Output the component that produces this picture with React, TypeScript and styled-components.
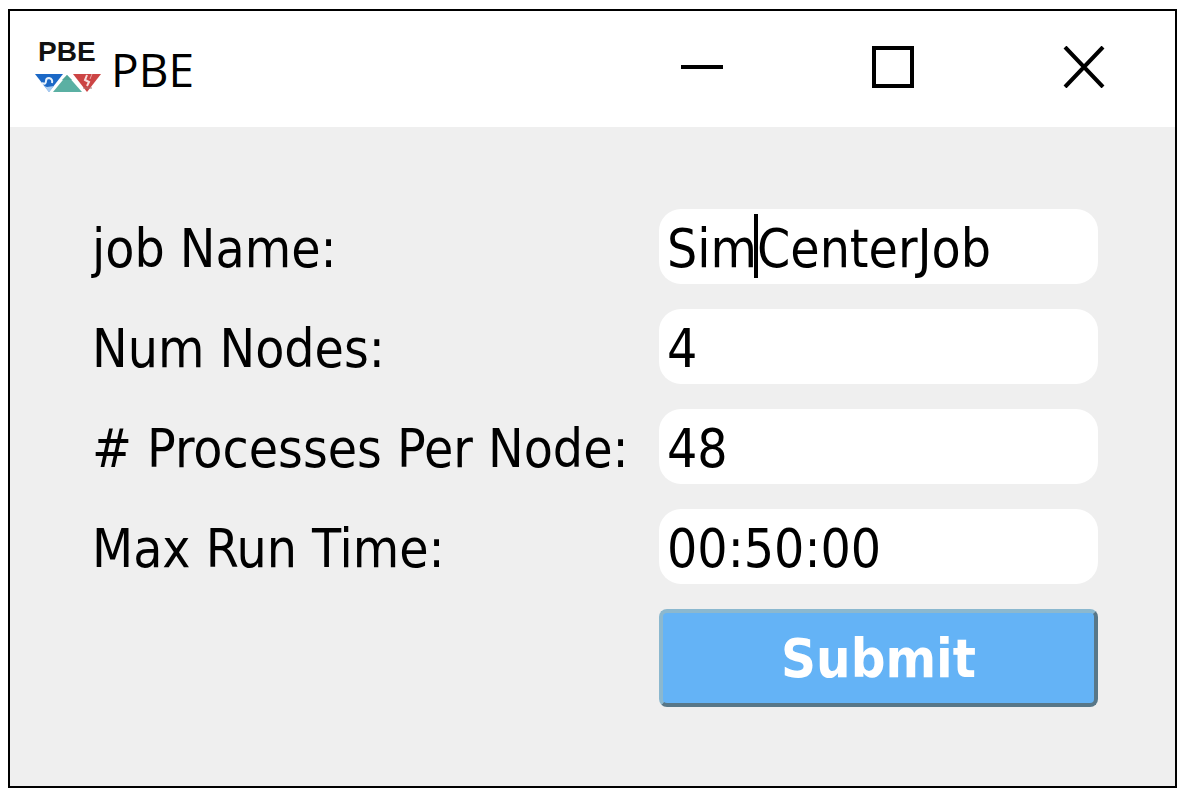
import React from "react";
import styled, { createGlobalStyle } from "styled-components";

const GlobalStyle = createGlobalStyle`
  *, *::before, *::after { box-sizing: border-box; }
  body {
    margin: 0;
    background: #ffffff;
    color: #000000;
    font-family: "DejaVu Sans Condensed", "DejaVu Sans", sans-serif;
  }
`;

const Page = styled.div`
  display: flex;
  min-height: 100vh;
  padding: 9px 10px 6px 8px;
`;

const Window = styled.main`
  flex: 1;
  display: flex;
  flex-direction: column;
  border: 2px solid #000000;
  background: #efefef;
`;

const TitleBar = styled.header`
  display: flex;
  align-items: stretch;
  justify-content: space-between;
  height: 116px;
  background: #ffffff;
`;

const Brand = styled.div`
  display: flex;
  align-items: center;
  gap: 9px;
  padding-left: 24px;
`;

const Title = styled.h1`
  margin: 0;
  font: 400 46px/64px "Open Sans", "Noto Sans", sans-serif;
`;

const WindowControls = styled.div`
  display: flex;
  gap: 9px;
`;

const ControlButton = styled.button`
  display: flex;
  align-items: center;
  justify-content: center;
  width: 182px;
  padding: 0 0 4px;
  border: 0;
  background: transparent;
`;

const Form = styled.form`
  display: grid;
  grid-template-columns: 567fr 439fr;
  row-gap: 25px;
  padding: 82px 77px 72px 82px;
`;

const Label = styled.label`
  padding-top: 4px;
  font-size: 53px;
  line-height: 71px;
  white-space: nowrap;
`;

const Field = styled.div`
  position: relative;
`;

const TextInput = styled.input`
  display: block;
  width: 100%;
  height: 75px;
  padding: 4px 8px 0;
  border: 0;
  border-radius: 22px;
  outline: 0;
  background: #ffffff;
  color: #000000;
  font-family: inherit;
  font-size: 53px;
`;

const Caret = styled.span`
  position: absolute;
  top: 5px;
  left: 95px;
  width: 4px;
  height: 64px;
  background: #000000;
`;

const SubmitButton = styled.button`
  grid-column: 2;
  height: 98px;
  padding: 0;
  border: 4px solid;
  border-color: #8bb8cf #587788 #587788 #8bb8cf;
  border-radius: 8px;
  background: #64b3f6;
  color: #ffffff;
  font-family: inherit;
  font-size: 54px;
  font-weight: 700;
`;

const Logo = () => (
  <svg width="68" height="78" viewBox="0 -10 68 78" role="img" aria-label="PBE logo">
    <text
      x="4"
      y="21"
      fontFamily="Liberation Sans, Arial, sans-serif"
      fontWeight="700"
      fontSize="28"
      fill="#111111"
    >
      PBE
    </text>
    <g transform="translate(0 -2)">
      <path d="M1 36H29L15 54Z" fill="#1b68c6" />
      <path d="M5 42Q9 48 13 49L20 48L15 54Z" fill="#a9cdf2" />
      <path
        d="M8 45Q12 47 12 43Q12 40 15 40Q19 41 18 45"
        fill="none"
        stroke="#e6f1fc"
        strokeWidth="2"
      />
      <path d="M33 37L48 54H19Z" fill="#5bb0a3" />
      <path d="M28 42L33 37L38 42Z" fill="#4fa598" />
      <path d="M39 36H67L53 54Z" fill="#cc4444" />
      <path d="M53 37L51 42L55 44L53 48" fill="none" stroke="#f8dede" strokeWidth="2" />
      <path d="M58 36L56 41" stroke="#eba4a4" strokeWidth="1" />
      <path d="M49 50H58" stroke="#a96a6a" strokeWidth="1" />
    </g>
  </svg>
);

const fields = [
  { id: "job-name", label: "job Name:", value: "SimCenterJob", caret: true },
  { id: "num-nodes", label: "Num Nodes:", value: "4" },
  { id: "processes", label: "# Processes Per Node:", value: "48" },
  { id: "max-run-time", label: "Max Run Time:", value: "00:50:00" },
];

export default function App() {
  return (
    <>
      <GlobalStyle />
      <Page>
        <Window>
          <TitleBar>
            <Brand>
              <Logo />
              <Title>PBE</Title>
            </Brand>
            <WindowControls>
              <ControlButton type="button" aria-label="Minimize">
                <svg width="42" height="42" viewBox="0 0 42 42">
                  <path d="M0 21H42" stroke="#000" strokeWidth="4" />
                </svg>
              </ControlButton>
              <ControlButton type="button" aria-label="Maximize">
                <svg width="42" height="42" viewBox="0 0 42 42">
                  <rect x="2" y="2" width="38" height="38" fill="none" stroke="#000" strokeWidth="4" />
                </svg>
              </ControlButton>
              <ControlButton type="button" aria-label="Close">
                <svg width="42" height="42" viewBox="0 0 42 42">
                  <path d="M2 1L40 41M40 1L2 41" stroke="#000" strokeWidth="4" />
                </svg>
              </ControlButton>
            </WindowControls>
          </TitleBar>
          <Form onSubmit={(event) => event.preventDefault()}>
            {fields.map((field) => (
              <React.Fragment key={field.id}>
                <Label htmlFor={field.id}>{field.label}</Label>
                <Field>
                  <TextInput id={field.id} type="text" defaultValue={field.value} />
                  {field.caret && <Caret />}
                </Field>
              </React.Fragment>
            ))}
            <SubmitButton type="submit">Submit</SubmitButton>
          </Form>
        </Window>
      </Page>
    </>
  );
}
